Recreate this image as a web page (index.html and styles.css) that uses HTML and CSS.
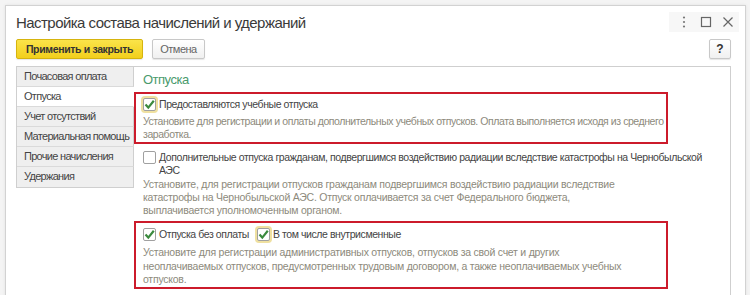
FILE: index.html
```html
<!DOCTYPE html>
<html lang="ru">
  <head>
    <meta charset="UTF-8" />
    <title>Настройка состава начислений и удержаний</title>
    <link rel="stylesheet" href="styles.css">
  </head>
  <body>
    <div class="window">
      <div class="titlebar">
        <h1>Настройка состава начислений и удержаний</h1>
        <div class="win-controls">
          <svg width="14" height="14" viewBox="0 0 14 14"><circle cx="7" cy="2.5" r="1.1" fill="#777"/><circle cx="7" cy="7" r="1.1" fill="#777"/><circle cx="7" cy="11.5" r="1.1" fill="#777"/></svg>
          <svg width="14" height="14" viewBox="0 0 14 14"><rect x="2.5" y="2.5" width="9" height="9" fill="none" stroke="#666" stroke-width="1.2"/></svg>
          <svg width="14" height="14" viewBox="0 0 14 14"><path d="M2.5 2.5 L11.5 11.5 M11.5 2.5 L2.5 11.5" stroke="#666" stroke-width="1.2"/></svg>
        </div>
      </div>

      <div class="toolbar">
        <button class="btn btn-default">Применить и закрыть</button>
        <button class="btn btn-cancel">Отмена</button>
        <button class="btn btn-help">?</button>
      </div>

      <div class="tabs">
        <ul class="tab-list">
          <li>Почасовая оплата</li>
          <li class="active">Отпуска</li>
          <li>Учет отсутствий</li>
          <li>Материальная помощь</li>
          <li>Прочие начисления</li>
          <li>Удержания</li>
        </ul>

        <div class="tab-page">
          <h2>Отпуска</h2>

          <div class="group marked first">
            <div class="check">
              <span class="cb checked focus"><svg width="13" height="13" viewBox="0 0 13 13"><path d="M2.5 6.5 L5.3 9.6 L10.8 2.8" fill="none" stroke="#3b8a3e" stroke-width="2.2"/></svg></span>
              <span class="label">Предоставляются учебные отпуска</span>
            </div>
            <p class="hint">Установите для регистрации и оплаты дополнительных учебных отпусков. Оплата выполняется исходя из среднего<br>заработка.</p>
          </div>

          <div class="group">
            <div class="check">
              <span class="cb"></span>
              <span class="label">Дополнительные отпуска гражданам, подвергшимся воздействию радиации вследствие катастрофы на Чернобыльской<br>АЭС</span>
            </div>
            <p class="hint">Установите, для регистрации отпусков гражданам подвергшимся воздействию радиации вследствие<br>катастрофы на Чернобыльской АЭС. Отпуск оплачивается за счет Федерального бюджета,<br>выплачивается уполномоченным органом.</p>
          </div>

          <div class="group marked last">
            <div class="check-row">
              <div class="check">
                <span class="cb checked"><svg width="13" height="13" viewBox="0 0 13 13"><path d="M2.5 6.5 L5.3 9.6 L10.8 2.8" fill="none" stroke="#3b8a3e" stroke-width="2.2"/></svg></span>
                <span class="label">Отпуска без оплаты</span>
              </div>
              <div class="check">
                <span class="cb checked focus"><svg width="13" height="13" viewBox="0 0 13 13"><path d="M2.5 6.5 L5.3 9.6 L10.8 2.8" fill="none" stroke="#3b8a3e" stroke-width="2.2"/></svg></span>
                <span class="label">В том числе внутрисменные</span>
              </div>
            </div>
            <p class="hint">Установите для регистрации административных отпусков, отпусков за свой счет и других<br>неоплачиваемых отпусков, предусмотренных трудовым договором, а также неоплачиваемых учебных<br>отпусков.</p>
          </div>
        </div>
      </div>
    </div>
  </body>
</html>
```

FILE: styles.css
```css
* {
    box-sizing: border-box;
}

body {
    margin: 0;
    background: #f4f4f4;
    font-family: 'Liberation Sans', Arial, sans-serif;
    color: #333;
    overflow: hidden;
}

.window {
    margin: 5px 0 0 5px;
    width: 741px;
    height: 310px;
    background: #fff;
    border: 1px solid #d2d2d2;
    padding: 0 14px 0 10px;
    box-shadow: 0 0 3px rgba(0, 0, 0, 0.08);
}

.titlebar {
    height: 32px;
    display: flex;
    align-items: center;
    justify-content: space-between;
}

h1 {
    margin: 0;
    font-size: 15px;
    letter-spacing: -0.55px;
    font-weight: normal;
    color: #3a3a3a;
}

.win-controls {
    display: flex;
    align-items: center;
    gap: 8px;
    margin-right: -8px;
    padding: 3px 4px 3px 8px;
    background: #f7f7f7;
}

.toolbar {
    display: flex;
    gap: 9px;
    margin-top: 1px;
    height: 20px;
}

.btn {
    font-family: inherit;
    font-size: 11px;
    letter-spacing: -0.5px;
    height: 20px;
    padding: 0;
    border: 1px solid #c8c8c8;
    border-radius: 2px;
    background: linear-gradient(#ffffff, #f0f0f0);
    color: #666;
    white-space: nowrap;
    box-shadow: 0 1px 1px rgba(0, 0, 0, 0.1);
}

.btn-default {
    width: 127px;
    background: linear-gradient(#fbe44a, #f2cf1c);
    border-color: #d6b40e;
    color: #333;
    font-weight: bold;
    font-size: 10.5px;
    letter-spacing: -0.35px;
}

.btn-cancel {
    width: 53px;
}

.btn-help {
    margin-left: auto;
    width: 22px;
    font-weight: bold;
    font-size: 12px;
    letter-spacing: 0;
    color: #333;
}

.tabs {
    display: flex;
    margin-top: 7px;
}

.tab-list {
    list-style: none;
    margin: 0;
    padding: 0;
    width: 118px;
    border: 1px solid #cfcfcf;
    border-right: none;
    align-self: flex-start;
}

.tab-list li {
    height: 20px;
    line-height: 19px;
    padding-left: 7px;
    font-size: 11px;
    letter-spacing: -0.7px;
    color: #444;
    background: #efefef;
    border-bottom: 1px solid #dadada;
    border-right: 1px solid #cfcfcf;
    white-space: nowrap;
}

.tab-list li:last-child {
    border-bottom: none;
}

.tab-list li.active {
    background: #fff;
    border-right-color: #fff;
}

.tab-page {
    flex: 1;
    height: 240px;
    border-top: 1px solid #cfcfcf;
    border-right: 1px solid #cfcfcf;
}

h2 {
    margin: 0;
    height: 25px;
    line-height: 26px;
    padding-left: 9px;
    font-size: 13px;
    letter-spacing: -0.5px;
    font-weight: normal;
    color: #4a9a6c;
}

.group {
    width: 590px;
    padding: 7px 8px 4px 9px;
}

.group.marked {
    width: 534px;
    border: 2px solid #cc1b2b;
    padding: 2px 6px 1px 7px;
}

.group.marked + .group {
    padding-top: 7px;
}

.group.last {
    padding-top: 3px;
    padding-bottom: 0;
}

.group.last .hint {
    margin-top: 4px;
    line-height: 13.5px;
}

.check-row {
    display: flex;
    gap: 8px;
}

.check {
    display: flex;
    align-items: flex-start;
    gap: 3px;
    font-size: 10.5px;
    letter-spacing: -0.42px;
    line-height: 13px;
    color: #444;
    white-space: nowrap;
}

.marked .check {
    line-height: 16px;
}

.cb {
    flex: none;
    width: 13px;
    height: 13px;
    border: 1px solid #a0a0a0;
    border-radius: 2px;
    background: #fff;
}

.marked .cb {
    margin-top: 1.5px;
}

.cb svg {
    display: block;
    margin: -1px;
}

.cb.focus {
    box-shadow: 0 0 0 2px #efe0a0;
}

.hint {
    margin: 3px 0 0;
    font-size: 10.5px;
    letter-spacing: -0.24px;
    line-height: 13px;
    color: #8d8a7c;
    white-space: nowrap;
}

.group.first .hint {
    letter-spacing: -0.43px;
}

.group:not(.marked) .hint {
    margin-top: 1px;
}
```
